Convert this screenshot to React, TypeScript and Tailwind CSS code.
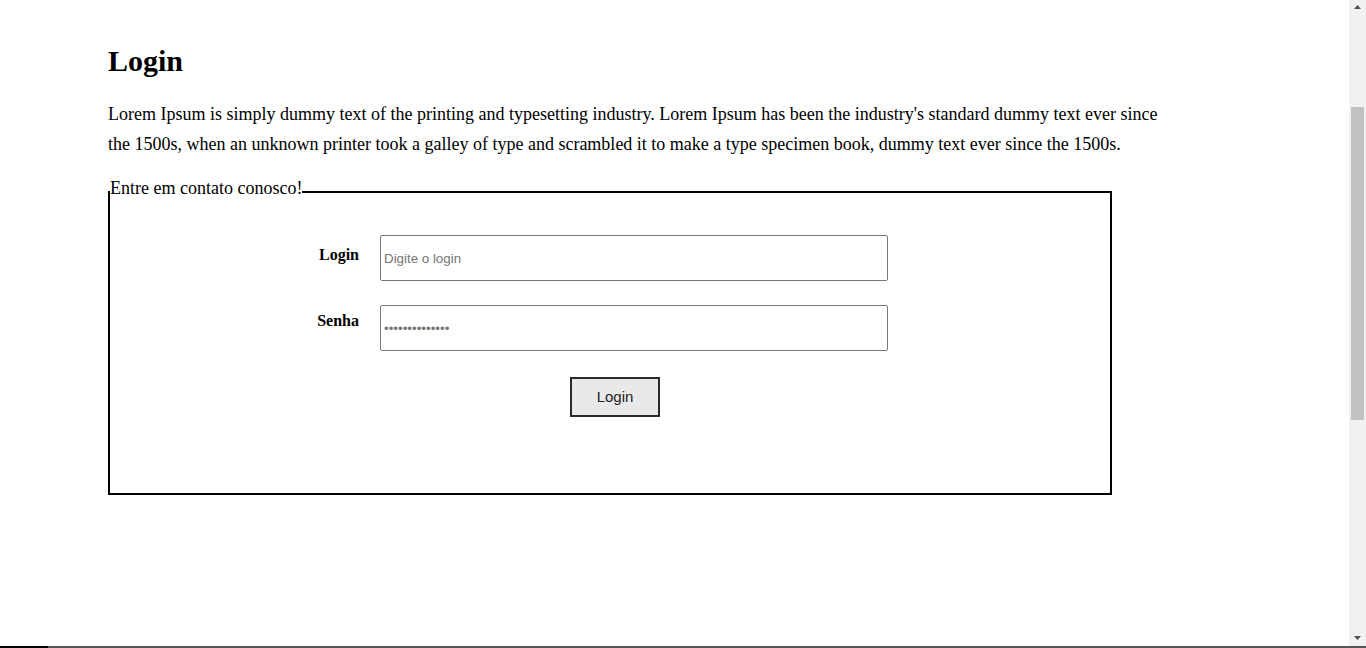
export default function App() {
  return (
    <div className="flex h-[648px] w-full flex-col overflow-hidden bg-white">
      <div className="flex min-h-0 flex-1">
        <main className="flex-1 pl-[108px] pt-[44px] font-['Liberation_Serif',serif] text-black">
          <h1 className="text-[30px] font-bold leading-[34px]">Login</h1>
          <p className="mt-[21px] w-[1070px] text-[18px] leading-[30px]">
            Lorem Ipsum is simply dummy text of the printing and typesetting
            industry. Lorem Ipsum has been the industry's standard dummy text
            ever since the 1500s, when an unknown printer took a galley of type
            and scrambled it to make a type specimen book, dummy text ever since
            the 1500s.
          </p>

          <fieldset className="mt-[19px] h-[317px] w-[1004px] border-2 border-black">
            <legend className="pb-[8px] text-[18px] leading-[20.7px]">
              Entre em contato conosco!
            </legend>

            <div className="mt-[28px] flex flex-col">
              <div className="flex">
                <label className="ml-[189px] w-[60px] pt-[8px] text-right text-[16px] font-bold">
                  Login
                </label>
                <input
                  type="text"
                  placeholder="Digite o login"
                  className="ml-[21px] h-[46px] w-[508px] rounded-[2px] border border-[#767676] px-[3px] pt-[1px] font-['Liberation_Sans',sans-serif] text-[13.33px] text-black outline-none placeholder:text-[#757575]"
                />
              </div>

              <div className="mt-[24px] flex">
                <label className="ml-[189px] w-[60px] pt-[4px] text-right text-[16px] font-bold">
                  Senha
                </label>
                <input
                  type="password"
                  placeholder="••••••••••••••"
                  className="ml-[21px] h-[46px] w-[508px] rounded-[2px] border border-[#767676] px-[3px] pt-[1px] font-['Liberation_Sans',sans-serif] text-[13.33px] text-black outline-none placeholder:text-[#757575]"
                />
              </div>

              <button
                type="button"
                className="ml-[460px] mt-[26px] h-[40px] w-[90px] border-2 border-[#2b2b2b] bg-[#e9e9e9] pt-[1px] font-['Liberation_Sans',sans-serif] text-[15px] text-[#222]"
              >
                Login
              </button>
            </div>
          </fieldset>
        </main>

        <aside className="flex w-[17px] flex-col items-center bg-[#f1f1f1]">
          <svg width="7" height="4" viewBox="0 0 7 4" className="mt-[5px]">
            <path d="M3.5 0 L7 4 L0 4 Z" fill="#505050" />
          </svg>
          <div className="mt-[98px] h-[313px] w-[13px] bg-[#c1c1c1]" />
          <div className="flex-1" />
          <svg width="7" height="4" viewBox="0 0 7 4" className="mb-[6px]">
            <path d="M0 0 L7 0 L3.5 4 Z" fill="#505050" />
          </svg>
        </aside>
      </div>
      <div className="flex h-[2px]">
        <div className="w-[48px] bg-black" />
        <div className="flex-1 bg-[#555]" />
      </div>
    </div>
  );
}
